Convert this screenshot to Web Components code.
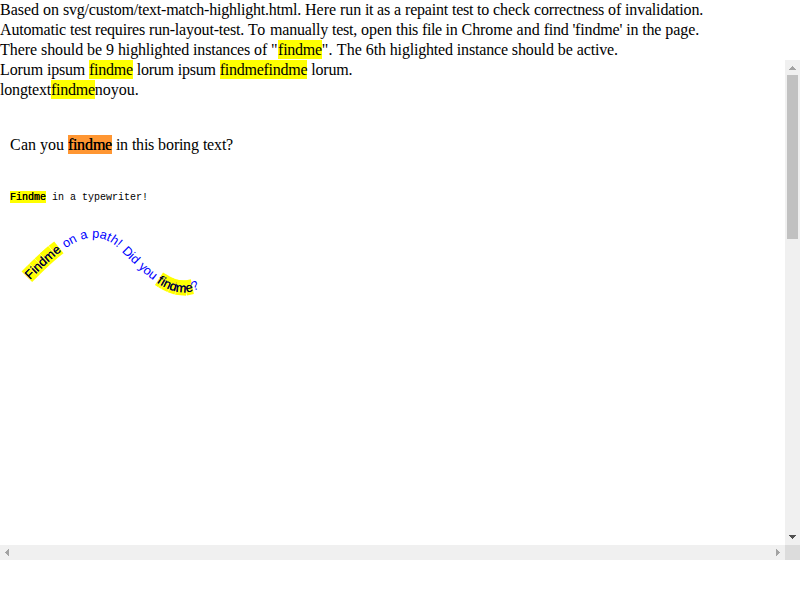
<!DOCTYPE html>
<html lang="en">
<head>
<meta charset="utf-8">
<title>Text match highlight</title>
<style>
html, body { margin: 0; height: 100%; overflow: hidden; background: #fff; }
body { font: 16px/20px "Liberation Serif", serif; color: #000; }
</style>
</head>
<body>
<find-page></find-page>
<script>
const pen = document.createElement('canvas').getContext('2d');
const widthOf = (text, font) => { pen.font = font; return pen.measureText(text).width; };
const SERIF = '16px "Liberation Serif"';

// Gives every word the width of its whole-pixel glyph advances.
const snapWords = scope => {
  const nodes = [];
  for (const p of scope.querySelectorAll('p')) {
    const walker = document.createTreeWalker(p, NodeFilter.SHOW_TEXT);
    while (walker.nextNode()) nodes.push(walker.currentNode);
  }
  for (const node of nodes) {
    const parts = document.createDocumentFragment();
    for (const word of node.data.match(/\s+|\S+/g)) {
      if (!word.trim()) { parts.append(word); continue; }
      const span = document.createElement('span');
      span.textContent = word;
      const target = [...word].reduce((sum, c) => sum + Math.round(widthOf(c, SERIF)), 0);
      const glyphs = word.replace(/fi/g, 'f').length;
      span.style.letterSpacing = (target - widthOf(word, SERIF)) / glyphs + 'px';
      parts.append(span);
    }
    node.replaceWith(parts);
  }
};

const define = (name, html, setup) => customElements.define(name, class extends HTMLElement {
  connectedCallback() {
    if (this.shadowRoot) return;
    const root = this.attachShadow({ mode: 'open' });
    const t = document.createElement('template');
    t.innerHTML = html;
    root.append(t.content.cloneNode(true));
    if (setup) setup(root, this);
  }
});

define('find-match', `<style>
:host { display: inline; padding: 1px 0; background: #ff0; }
</style><slot></slot>`);

define('scroll-bar', `<style>
:host { display: flex; justify-content: space-between; background: #f0f0f0; min-width: 0; min-height: 0; }
:host([axis="y"]) { flex-direction: column; }
svg { display: block; flex: none; width: 15px; height: 15px; shape-rendering: crispEdges; }
.track { flex: 1; }
.thumb { width: 11px; height: 164px; margin: 0 auto; background: #c1c1c1; }
:host([axis="x"]) .thumb { display: none; }
:host([axis="y"]) .h, :host([axis="x"]) .v { display: none; }
</style>
<svg class="v" viewBox="0 0 15 15" fill="#a3a3a3"><path d="M7 6h1v1h1v1h1v1h1v1H4V9h1V8h1V7h1z"/></svg>
<svg class="h" viewBox="0 0 15 15" fill="#a3a3a3"><path d="M5 7h1v-1h1v-1h1v-1h1v7H8v-1H7V9H6V8H5z"/></svg>
<div class="track"><div class="thumb"></div></div>
<svg class="v" viewBox="0 0 15 15" fill="#505050"><path d="M4 5h7v1h-1v1h-1v1h-1v1H7V8H6V7H5V6H4z"/></svg>
<svg class="h" viewBox="0 0 15 15" fill="#a3a3a3"><path d="M6 4h1v1h1v1h1v1h1v1H9v1H8v1H7v1H6z"/></svg>`);

define('match-drawing', `<style>
:host { display: block; }
svg { display: block; width: 100%; height: 300px; }
text { white-space: pre; }
.hit { fill: #000; text-shadow: 0 0 0 #000; }
#curved .hit { text-shadow: 0 0 0 #00f; }
.box { fill: #ff0; }
.box.active { fill: #ff9632; }
</style>
<svg>
<rect class="box active" x="68" y="35" width="44" height="19"/>
<text id="plain" x="10" y="50" font-family="Liberation Serif, serif" font-size="16">Can you <tspan class="hit">findme</tspan> in this boring text?</text>
<rect class="box" x="10" y="91" width="36" height="12"/>
<text x="10" y="100" font-family="Liberation Mono, monospace" font-size="10"><tspan class="hit">Findme</tspan> in a typewriter!</text>
<g transform="translate(0 120) scale(.3)">
<defs><path id="wave" d="M100 200C200 100 300 0 400 100C500 200 600 300 700 200C800 100 900 100 900 100"/></defs>
<g id="under"></g>
<text id="curved" font-family="Liberation Sans, sans-serif" font-size="42.5" fill="blue"><textPath href="#wave"><tspan class="hit">Findme</tspan> on a path! Did you <tspan class="hit">findme</tspan>?</textPath></text>
<g id="over"></g>
</g>
</svg>`, root => {
  const plain = root.getElementById('plain');
  let x = 10;
  plain.setAttribute('x', [...plain.textContent].map(c => {
    const at = x;
    x += Math.round(widthOf(c, SERIF));
    return at;
  }).join(' '));

  const curved = root.getElementById('curved');
  const text = curved.textContent;
  const natural = [...text].map(c => widthOf(c, '42.5px "Liberation Sans"'));
  const snapped = natural.map(w => Math.round(w * .3) / .3);
  // Extra room at the start of "on" and of "Did".
  const extra = { 7: 2, 17: 1.5 };
  curved.setAttribute('dx', natural.map((w, i) => i ? (snapped[i - 1] - natural[i - 1] + (extra[i] || 0)).toFixed(3) : 0).join(' '));

  const box = (layer, i, height) => {
    const p = curved.getStartPositionOfChar(i);
    const r = document.createElementNS('http://www.w3.org/2000/svg', 'rect');
    r.setAttribute('class', 'box');
    r.setAttribute('y', -40);
    r.setAttribute('width', snapped[i]);
    r.setAttribute('height', height);
    r.setAttribute('transform', `translate(${p.x} ${p.y}) rotate(${curved.getRotationOfChar(i)})`);
    root.getElementById(layer).append(r);
  };
  for (const m of text.matchAll(/findme/gi))
    for (let i = m.index; i < m.index + 6; i++) {
      box('under', i, 50);
      // The box of the m lies over the ascender of the d before it.
      if (text[i] === 'm') box('over', i, 15);
    }
});

define('scroll-frame', `<style>
:host { display: grid; grid-template: 485px 15px / 1fr 15px; }
.view { overflow: hidden; }
.corner { background: #dcdcdc; }
</style>
<div class="view"><slot></slot></div>
<scroll-bar axis="y"></scroll-bar>
<scroll-bar axis="x"></scroll-bar>
<div class="corner"></div>`);

define('find-page', `<style>
:host { display: block; width: 800px; }
p { margin: 0; white-space: nowrap; font-feature-settings: "liga" 1; }
</style>
<p>Based on svg/custom/text-match-highlight.html. Here run it as a repaint test to check correctness of invalidation.</p>
<p>Automatic test requires run-layout-test. To manually test, open this file in Chrome and find 'findme' in the page.</p>
<p>There should be 9 highlighted instances of "<find-match>findme</find-match>". The 6th higlighted instance should be active.</p>
<scroll-frame>
<p>Lorum ipsum <find-match>findme</find-match> lorum ipsum <find-match>findme</find-match><find-match>findme</find-match> lorum.</p>
<p>longtext<find-match>findme</find-match>noyou.</p>
<match-drawing></match-drawing>
</scroll-frame>`, root => snapWords(root));
</script>
</body>
</html>
